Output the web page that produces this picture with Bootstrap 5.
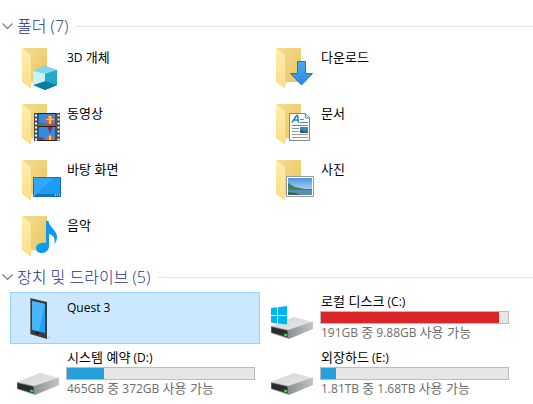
<!DOCTYPE html>
<html lang="ko">
<head>
<meta charset="utf-8">
<meta name="viewport" content="width=device-width, initial-scale=1">
<title>내 PC</title>
<link href="https://cdn.jsdelivr.net/npm/bootstrap@5.3.0/dist/css/bootstrap.min.css" rel="stylesheet">
<style>
body { font-family: "Noto Sans CJK KR", sans-serif; font-size: 13px; line-height: 16px; color: #000; background: #fff; }
.latin { font-family: "Open Sans", "Noto Sans CJK KR", sans-serif; font-size: 12px; }
.group-toggle { font-family: "Open Sans", "Noto Sans CJK KR", sans-serif; font-size: 16px; font-weight: 300; line-height: 30px; color: #1e3287; }
.group-toggle svg { margin: 0 4px 0 2px; }
.group-rule { height: 1px; background: #e2e2e2; }
.page { padding-top: 11px; }
.tiles { display: grid; grid-template-columns: repeat(auto-fill, 250px); gap: 4px; padding-left: 10px; padding-bottom: 1px; }
.tile { height: 52px; border: 1px solid transparent; padding: 2px 4px 0 5px; color: #000; text-align: left; }
.tile:hover { background: #e5f3ff; }
.tile.selected { background: #cce8ff; border-color: #99d1ff; }
.tile svg { width: 48px; height: 48px; flex: none; }
.tile-text { padding: 4px 0 0 2px; }
.tile-text.drive { padding-top: 0; margin-top: -3px; }
.tile-name { line-height: 17px; padding-left: 1px; }
.tile-info { color: #6d6d6d; padding-left: 1px; }
.drive .tile-name { line-height: 18px; }
.usage { height: 13px; border: 1px solid #bcbcbc; border-radius: 0; background: #e6e6e6; width: 189px; }
.usage .progress-bar { background: #26a0da; }
.usage .full { background: #da2626; }
</style>
<script src="https://cdn.jsdelivr.net/npm/bootstrap@5.3.0/dist/js/bootstrap.bundle.min.js"></script>
</head>
<body>
<svg width="0" height="0" class="position-absolute" aria-hidden="true">
  <defs>
    <linearGradient id="gBack" x1="0" y1="0" x2="1" y2="1"><stop offset="0" stop-color="#f5dc8c"/><stop offset="1" stop-color="#e9c661"/></linearGradient>
    <linearGradient id="gFlap" x1="0" y1="0" x2="0" y2="1"><stop offset="0" stop-color="#ffeeb0"/><stop offset="1" stop-color="#fbdd85"/></linearGradient>
    <linearGradient id="gDrive" x1="0" y1="0" x2="1" y2="1"><stop offset="0" stop-color="#d2d3d6"/><stop offset="1" stop-color="#e8e8eb"/></linearGradient>
    <linearGradient id="gSide" x1="0" y1="0" x2="1" y2="0"><stop offset="0" stop-color="#8d8f93"/><stop offset="1" stop-color="#c3c4c8"/></linearGradient>
    <linearGradient id="gSky" x1="0" y1="0" x2="0" y2="1"><stop offset="0" stop-color="#4f95e0"/><stop offset="1" stop-color="#d5ecf7"/></linearGradient>
    <linearGradient id="gArrow" x1="0" y1="0" x2="0" y2="1"><stop offset="0" stop-color="#4aa9f2"/><stop offset="1" stop-color="#2b8be2"/></linearGradient>
    <symbol id="folder" viewBox="0 0 48 48">
      <path d="M6 4h25v34H12z" fill="url(#gBack)"/>
      <path d="M14 44l4-6h-4z" fill="#ddd" opacity=".6"/>
      <path d="M6 4l9 7v33.500l-9-6.500z" fill="url(#gFlap)"/>
    </symbol>
    <symbol id="drive" viewBox="0 0 48 48">
      <path d="M1 31l23-9 19 5-24 8z" fill="url(#gDrive)"/>
      <path d="M18 35l25-8.500V34l-24 10z" fill="url(#gSide)"/>
      <path d="M1 31l18 4v9L1 38z" fill="#8b8c8e"/>
      <path d="M1.500 32l16 3.800v6.500l-16-4.800z" fill="#292b2d"/>
      <path d="M14 38.500l3 .8v1.900l-3-.8z" fill="#41e24a"/>
    </symbol>
  </defs>
</svg>
<main class="page overflow-hidden">
  <section>
    <h2 class="m-0 d-flex align-items-center">
      <button type="button" class="group-toggle border-0 bg-transparent p-0 d-flex align-items-center" aria-expanded="true" data-bs-toggle="collapse" data-bs-target="#folders">
        <svg width="11" height="8" viewBox="0 0 11 8" fill="none" stroke="#777" stroke-width="1.200"><path d="M.5 1.500l5 5 5-5"/></svg>
        <span>폴더 (7)</span>
      </button>
      <span class="group-rule flex-grow-1 ms-2"></span>
    </h2>
    <div id="folders" class="collapse show"><div class="tiles">
      <button type="button" class="tile bg-transparent d-flex">
        <svg viewBox="0 0 48 48"><use href="#folder"/><path d="M17 27l12-5 12 4v15l-12 5-12-5z" fill="#3ab7d5"/><path d="M17 27l12-5 12 4-12 4z" fill="#80d8e8"/><path d="M17 27l12 3v16l-12-5z" fill="#aeeaf2"/><path d="M29 30l12-4v15l-12 5z" fill="#23a8cc"/><path d="M17 41l12-4 12 4-12 5z" fill="#087e9c"/><path d="M17 41l12-4v-7l-12-3z" fill="#c6f3f6"/></svg>
        <span class="tile-text"><span class="tile-name d-block"><span class="latin">3D </span>개체</span></span>
      </button>
      <button type="button" class="tile bg-transparent d-flex">
        <svg viewBox="0 0 48 48"><use href="#folder"/><path d="M27.500 17.500h8v12h7L31.500 41 20.500 29.500h7z" fill="url(#gArrow)" stroke="#2474b9"/></svg>
        <span class="tile-text"><span class="tile-name d-block">다운로드</span></span>
      </button>
      <button type="button" class="tile bg-transparent d-flex">
        <svg viewBox="0 0 48 48"><use href="#folder"/><path d="M18 13h26v28H18z" fill="#4c4c4c"/><path d="M20 14.500v26M42.500 14.500v26" stroke="#f4f4f4" stroke-width="2" stroke-dasharray="2 2"/><path d="M22 13h18v28H22z" fill="#222"/><path d="M22.500 14h17v12h-17zM22.500 27h17v13h-17z" fill="#2f8cea"/><path d="M22.500 22l6 1 11 1v2h-17z" fill="#a8505f"/><path d="M22.500 24h6v2h-6z" fill="#3f7f55"/><ellipse cx="34" cy="19.500" rx="4.500" ry="4" fill="#ec5537"/><path d="M32.500 16h3l-.5 8h-2zM30 19h8v1h-8z" fill="#f9d644"/><path d="M29.500 27h9l-3 4h-3z" fill="#ef4c3b"/><path d="M31.500 27h5L34 33z" fill="#463f91"/><path d="M29.500 40c0-6 9-6 9 0z" fill="#ed5c40"/><path d="M33 35.500h2V40h-2z" fill="#f9dc45"/><path d="M22.500 37l5 1v2h-5z" fill="#7b405a"/></svg>
        <span class="tile-text"><span class="tile-name d-block">동영상</span></span>
      </button>
      <button type="button" class="tile bg-transparent d-flex">
        <svg viewBox="0 0 48 48"><use href="#folder"/><path d="M19.500 13.500h16l4 4v23h-20z" fill="#fafafa" stroke="#858585"/><path d="M35.500 13.500v4.500h4" fill="#ddd" stroke="#858585"/><path d="M22 22.500l4.500-7h1l1 7M24 20h4" fill="none" stroke="#2583c7" stroke-width="1.500"/><path d="M30 19.500h4M30 22.500h8M22 25.500h16" stroke="#4294cf"/><path d="M22 28.500h7M22 31.500h7M22 34.500h16M22 37.500h16" stroke="#999"/><path d="M30 27h8v6h-8z" fill="#3d82b5"/><path d="M30 30l8 2v1h-8z" fill="#2d6160"/></svg>
        <span class="tile-text"><span class="tile-name d-block">문서</span></span>
      </button>
      <button type="button" class="tile bg-transparent d-flex">
        <svg viewBox="0 0 48 48"><use href="#folder"/><path d="M17.500 21.500h27v19h-27z" fill="#1e9cf5" stroke="#0f73b5"/><path d="M18 22h20L20 38h-2z" fill="#3daeff" opacity=".6"/><path d="M18 38h26v2H18z" fill="#1173bd"/><path d="M18 39h1M39 39h1M41 39h1M43 39h1" stroke="#fff"/></svg>
        <span class="tile-text"><span class="tile-name d-block">바탕 화면</span></span>
      </button>
      <button type="button" class="tile bg-transparent d-flex">
        <svg viewBox="0 0 48 48"><use href="#folder"/><path d="M16.500 20.500h27v20h-27z" fill="#fff" stroke="#999"/><path d="M18 22h24v17H18z" fill="url(#gSky)"/><path d="M18 27l7 4 10 2h7v2H18z" fill="#467c62"/><path d="M18 34h24v5H18z" fill="#5593ad"/><path d="M18 36l8 1 5 2H18z" fill="#3b6657"/></svg>
        <span class="tile-text"><span class="tile-name d-block">사진</span></span>
      </button>
      <button type="button" class="tile bg-transparent d-flex">
        <svg viewBox="0 0 48 48"><use href="#folder"/><path d="M30 9h2.500c1 7 8.500 9 8.500 16 0 3-1 5-3 7 2-6-1-9-5-10v12c0 4-3 7-7 7s-6-2-6-5 4-6 10-5z" fill="#0b9af0"/></svg>
        <span class="tile-text"><span class="tile-name d-block">음악</span></span>
      </button>
    </div></div>
  </section>
  <section>
    <h2 class="m-0 d-flex align-items-center">
      <button type="button" class="group-toggle border-0 bg-transparent p-0 d-flex align-items-center" aria-expanded="true" data-bs-toggle="collapse" data-bs-target="#drives">
        <svg width="11" height="8" viewBox="0 0 11 8" fill="none" stroke="#777" stroke-width="1.200"><path d="M.5 1.500l5 5 5-5"/></svg>
        <span>장치 및 드라이브 (5)</span>
      </button>
      <span class="group-rule flex-grow-1 ms-2"></span>
    </h2>
    <div id="drives" class="collapse show"><div class="tiles">
      <button type="button" class="tile selected d-flex">
        <svg viewBox="0 0 48 48"><path d="M29 43l4 1 1-3z" fill="#9ab" opacity=".5"/><path d="M14 3l17 4v37l-17-5z" fill="#3c3c3e"/><path d="M14 3l1 0v36l-1 0z" fill="#777"/><path d="M16 6l13 3v29l-13-3z" fill="#1ba1f8"/><path d="M16 6l13 3-6 27-7-2z" fill="#4bb5fa"/><path d="M20 37.500l3 1" stroke="#111" stroke-width="1.500"/></svg>
        <span class="tile-text"><span class="tile-name latin d-block">Quest 3</span></span>
      </button>
      <button type="button" class="tile bg-transparent d-flex">
        <svg viewBox="0 0 48 48"><use href="#drive"/><path d="M1 13l6-.7V20H1zM8 12.200l9-1.200v9H8zM1 21h6v7.500l-6-.9zM8 21h9v8.500l-9-1z" fill="#00b4f0"/></svg>
        <span class="tile-text drive"><span class="tile-name d-block">로컬 디스크<span class="latin"> (C:)</span></span>
          <span class="usage progress" role="progressbar" aria-label="로컬 디스크" aria-valuenow="95" aria-valuemin="0" aria-valuemax="100"><span class="progress-bar full" style="width:95%"></span></span>
          <span class="tile-info d-block"><span class="latin">191GB </span>중<span class="latin"> 9.88GB </span>사용 가능</span></span>
      </button>
      <button type="button" class="tile bg-transparent d-flex">
        <svg viewBox="0 0 48 48"><use href="#drive"/></svg>
        <span class="tile-text drive"><span class="tile-name d-block">시스템 예약<span class="latin"> (D:)</span></span>
          <span class="usage progress" role="progressbar" aria-label="시스템 예약" aria-valuenow="20" aria-valuemin="0" aria-valuemax="100"><span class="progress-bar" style="width:20%"></span></span>
          <span class="tile-info d-block"><span class="latin">465GB </span>중<span class="latin"> 372GB </span>사용 가능</span></span>
      </button>
      <button type="button" class="tile bg-transparent d-flex">
        <svg viewBox="0 0 48 48"><use href="#drive"/></svg>
        <span class="tile-text drive"><span class="tile-name d-block">외장하드<span class="latin"> (E:)</span></span>
          <span class="usage progress" role="progressbar" aria-label="외장하드" aria-valuenow="8" aria-valuemin="0" aria-valuemax="100"><span class="progress-bar" style="width:8%"></span></span>
          <span class="tile-info d-block"><span class="latin">1.81TB </span>중<span class="latin"> 1.68TB </span>사용 가능</span></span>
      </button>
    </div></div>
  </section>
</main>
</body>
</html>
